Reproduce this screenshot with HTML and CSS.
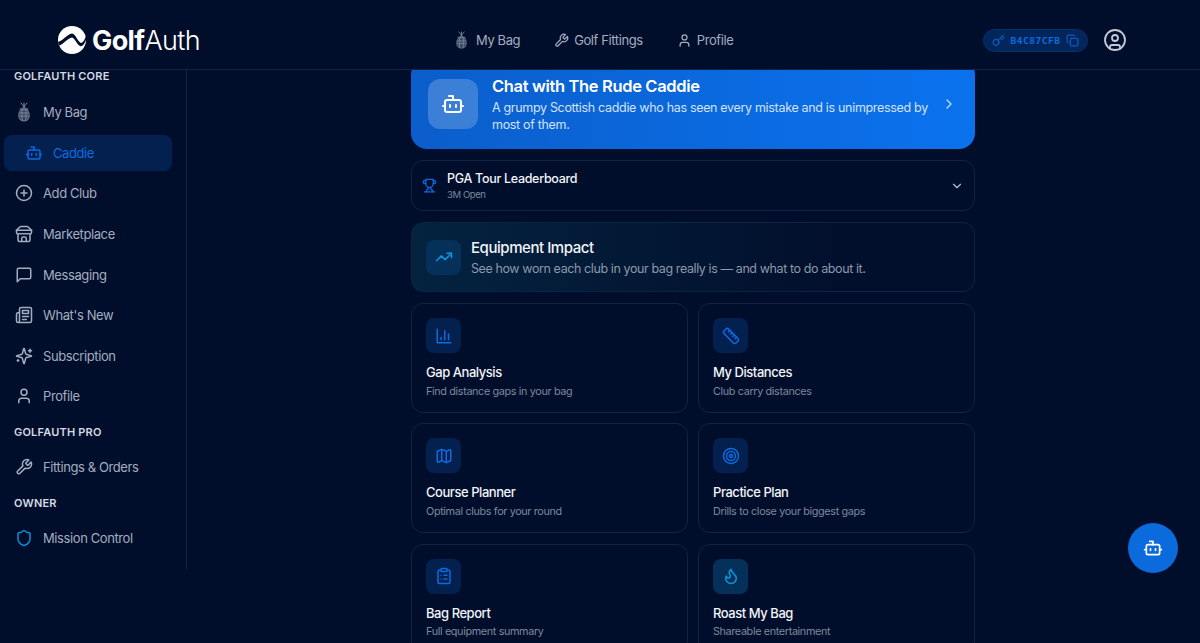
FILE: index.html
```html
<!DOCTYPE html>
<html lang="en">
<head>
    <meta charset="UTF-8">
    <meta name="viewport" content="width=device-width, initial-scale=1.0">
    <title>GolfAuth</title>
    <link rel="stylesheet" href="styles.css">
</head>
<body>
    <svg class="sprites" aria-hidden="true">
        <symbol id="i-bot" viewBox="0 0 24 24"><path d="M12 8V4H8"/><rect width="16" height="12" x="4" y="8" rx="2"/><path d="M2 14h2"/><path d="M20 14h2"/><path d="M15 13v2"/><path d="M9 13v2"/></symbol>
        <symbol id="i-bag" viewBox="0 0 14 20"><path d="M4 1l5 6M10 1L5 7M7 1v5M3 7h8"/><path d="M3.500 8C2 10 1.500 12 2 15c.3 2 1.500 4 5 4s4.700-2 5-4c.500-3 0-5-1.500-7z" fill="currentColor" fill-opacity=".45"/><path d="M3 11h8M3 14h8M5 8v10M9 8v10"/></symbol>
        <symbol id="i-plus" viewBox="0 0 24 24"><circle cx="12" cy="12" r="10"/><path d="M8 12h8"/><path d="M12 8v8"/></symbol>
        <symbol id="i-store" viewBox="0 0 24 24"><path d="m2 7 4.410-4.410A2 2 0 0 1 7.830 2h8.340a2 2 0 0 1 1.420.590L22 7"/><path d="M4 12v8a2 2 0 0 0 2 2h12a2 2 0 0 0 2-2v-8"/><path d="M15 22v-4a2 2 0 0 0-2-2h-2a2 2 0 0 0-2 2v4"/><path d="M2 7h20"/><path d="M22 7v3a2 2 0 0 1-2 2 2.700 2.700 0 0 1-1.590-.630.700.700 0 0 0-.820 0A2.700 2.700 0 0 1 16 12a2.700 2.700 0 0 1-1.590-.630.700.700 0 0 0-.820 0A2.700 2.700 0 0 1 12 12a2.700 2.700 0 0 1-1.590-.630.700.700 0 0 0-.820 0A2.700 2.700 0 0 1 8 12a2.700 2.700 0 0 1-1.590-.630.700.700 0 0 0-.820 0A2.700 2.700 0 0 1 4 12a2 2 0 0 1-2-2V7"/></symbol>
        <symbol id="i-message" viewBox="0 0 24 24"><path d="M21 15a2 2 0 0 1-2 2H7l-4 4V5a2 2 0 0 1 2-2h14a2 2 0 0 1 2 2z"/></symbol>
        <symbol id="i-news" viewBox="0 0 24 24"><path d="M4 22h16a2 2 0 0 0 2-2V4a2 2 0 0 0-2-2H8a2 2 0 0 0-2 2v16a2 2 0 0 1-2 2Zm0 0a2 2 0 0 1-2-2v-9c0-1.100.9-2 2-2h2"/><path d="M18 14h-8"/><path d="M15 18h-5"/><path d="M10 6h8v4h-8V6Z"/></symbol>
        <symbol id="i-spark" viewBox="0 0 24 24"><path d="M9.937 15.500A2 2 0 0 0 8.500 14.063l-6.135-1.582a.5.5 0 0 1 0-.962L8.500 9.936A2 2 0 0 0 9.937 8.500l1.582-6.135a.5.5 0 0 1 .963 0L14.063 8.500A2 2 0 0 0 15.500 9.937l6.135 1.581a.5.5 0 0 1 0 .964L15.500 14.063a2 2 0 0 0-1.437 1.437l-1.582 6.135a.5.5 0 0 1-.963 0z"/><path d="M20 3v4"/><path d="M22 5h-4"/><path d="M4 17v2"/><path d="M5 18H3"/></symbol>
        <symbol id="i-user" viewBox="0 0 24 24"><path d="M19 21v-2a4 4 0 0 0-4-4H9a4 4 0 0 0-4 4v2"/><circle cx="12" cy="7" r="4"/></symbol>
        <symbol id="i-wrench" viewBox="0 0 24 24"><path d="M14.700 6.300a1 1 0 0 0 0 1.400l1.600 1.600a1 1 0 0 0 1.400 0l3.770-3.770a6 6 0 0 1-7.940 7.940l-6.910 6.910a2.120 2.120 0 0 1-3-3l6.910-6.910a6 6 0 0 1 7.940-7.940l-3.760 3.760z"/></symbol>
        <symbol id="i-shield" viewBox="0 0 24 24"><path d="M20 13c0 5-3.500 7.500-7.660 8.950a1 1 0 0 1-.670-.010C7.500 20.500 4 18 4 13V6a1 1 0 0 1 1-1c2 0 4.500-1.200 6.240-2.720a1.170 1.170 0 0 1 1.520 0C14.510 3.810 17 5 19 5a1 1 0 0 1 1 1z"/></symbol>
        <symbol id="i-key" viewBox="0 0 24 24"><path d="m15.500 7.500 2.300 2.300a1 1 0 0 0 1.400 0l2.100-2.100a1 1 0 0 0 0-1.400L19 4"/><path d="m21 2-9.600 9.600"/><circle cx="7.500" cy="15.500" r="5.500"/></symbol>
        <symbol id="i-copy" viewBox="0 0 24 24"><rect width="14" height="14" x="8" y="8" rx="2"/><path d="M4 16c-1.100 0-2-.9-2-2V4c0-1.100.9-2 2-2h10c1.100 0 2 .9 2 2"/></symbol>
        <symbol id="i-account" viewBox="0 0 24 24"><circle cx="12" cy="12" r="10"/><circle cx="12" cy="10" r="3"/><path d="M7 20.662V19a2 2 0 0 1 2-2h6a2 2 0 0 1 2 2v1.662"/></symbol>
        <symbol id="i-trophy" viewBox="0 0 24 24"><path d="M6 9H4.500a2.500 2.500 0 0 1 0-5H6"/><path d="M18 9h1.500a2.500 2.500 0 0 0 0-5H18"/><path d="M4 22h16"/><path d="M10 14.660V17c0 .55-.47.98-.97 1.210C7.850 18.750 7 20.240 7 22"/><path d="M14 14.660V17c0 .55.47.98.97 1.210C16.150 18.750 17 20.240 17 22"/><path d="M18 2H6v7a6 6 0 0 0 12 0V2Z"/></symbol>
        <symbol id="i-trend" viewBox="0 0 24 24"><path d="M22 7l-8.500 8.500-5-5L2 17"/><path d="M16 7h6v6"/></symbol>
        <symbol id="i-chart" viewBox="0 0 24 24"><path d="M3 3v18h18"/><path d="M18 17V9"/><path d="M13 17V5"/><path d="M8 17v-3"/></symbol>
        <symbol id="i-ruler" viewBox="0 0 24 24"><path d="M21.300 15.300a2.400 2.400 0 0 1 0 3.400l-2.600 2.600a2.400 2.400 0 0 1-3.400 0L2.700 8.700a2.410 2.410 0 0 1 0-3.400l2.600-2.600a2.410 2.410 0 0 1 3.400 0Z"/><path d="m14.500 12.500 2-2"/><path d="m11.500 9.500 2-2"/><path d="m8.500 6.500 2-2"/><path d="m17.500 15.500 2-2"/></symbol>
        <symbol id="i-map" viewBox="0 0 24 24"><path d="M14.106 5.553a2 2 0 0 0 1.788 0l3.659-1.830A1 1 0 0 1 21 4.619v12.764a1 1 0 0 1-.553.894l-4.553 2.277a2 2 0 0 1-1.788 0l-4.212-2.106a2 2 0 0 0-1.788 0l-3.659 1.830A1 1 0 0 1 3 19.381V6.618a1 1 0 0 1 .553-.894l4.553-2.277a2 2 0 0 1 1.788 0z"/><path d="M15 5.764v15"/><path d="M9 3.236v15"/></symbol>
        <symbol id="i-target" viewBox="0 0 24 24"><circle cx="12" cy="12" r="10"/><circle cx="12" cy="12" r="6"/><circle cx="12" cy="12" r="2"/></symbol>
        <symbol id="i-clipboard" viewBox="0 0 24 24"><rect width="8" height="4" x="8" y="2" rx="1"/><path d="M16 4h2a2 2 0 0 1 2 2v14a2 2 0 0 1-2 2H6a2 2 0 0 1-2-2V6a2 2 0 0 1 2-2h2"/><path d="M12 11h4"/><path d="M12 16h4"/><path d="M8 11h.01"/><path d="M8 16h.01"/></symbol>
        <symbol id="i-flame" viewBox="0 0 24 24"><path d="M8.500 14.500A2.500 2.500 0 0 0 11 12c0-1.380-.5-2-1-3-1.072-2.143-.224-4.054 2-6 .5 2.500 2 4.900 4 6.500 2 1.600 3 3.500 3 5.500a7 7 0 1 1-14 0c0-1.153.433-2.294 1-3a2.500 2.500 0 0 0 2.500 2.500z"/></symbol>
    </svg>

    <header class="topbar">
        <a class="logo">
            <svg class="logo-mark" viewBox="0 0 28 28"><circle cx="14" cy="14" r="14" fill="#fff"/><path d="M0 16C5 15 9 8 14 7.500 18 8 19 15 23 17c2 0 4-4 5-7v4c-2 5-4 7-6 6-3-1-5-8-8-8.500-4 .5-9 7-13 8z" fill="#010e2b"/></svg>
            <span class="logo-text"><b>Golf</b>Auth</span>
        </a>
        <nav class="topnav">
            <a class="topnav-link"><svg class="icon icon-bag"><use href="#i-bag"/></svg>My Bag</a>
            <a class="topnav-link"><svg class="icon"><use href="#i-wrench"/></svg>Golf Fittings</a>
            <a class="topnav-link"><svg class="icon"><use href="#i-user"/></svg>Profile</a>
        </nav>
        <div class="topbar-right">
            <div class="key-pill">
                <svg class="icon"><use href="#i-key"/></svg>
                <span class="key-code">B4C87CFB</span>
                <svg class="icon"><use href="#i-copy"/></svg>
            </div>
            <svg class="icon account"><use href="#i-account"/></svg>
        </div>
    </header>

    <div class="layout">
        <aside class="sidebar">
            <div class="side-label first">GOLFAUTH CORE</div>
            <a class="side-item"><svg class="icon icon-bag"><use href="#i-bag"/></svg>My Bag</a>
            <a class="side-item active"><svg class="icon"><use href="#i-bot"/></svg>Caddie</a>
            <a class="side-item"><svg class="icon"><use href="#i-plus"/></svg>Add Club</a>
            <a class="side-item"><svg class="icon"><use href="#i-store"/></svg>Marketplace</a>
            <a class="side-item"><svg class="icon"><use href="#i-message"/></svg>Messaging</a>
            <a class="side-item"><svg class="icon"><use href="#i-news"/></svg>What's New</a>
            <a class="side-item"><svg class="icon"><use href="#i-spark"/></svg>Subscription</a>
            <a class="side-item"><svg class="icon"><use href="#i-user"/></svg>Profile</a>
            <div class="side-label">GOLFAUTH PRO</div>
            <a class="side-item"><svg class="icon"><use href="#i-wrench"/></svg>Fittings &amp; Orders</a>
            <div class="side-label">OWNER</div>
            <a class="side-item"><svg class="icon icon-shield"><use href="#i-shield"/></svg>Mission Control</a>
        </aside>

        <main class="main">
            <div class="content">
                <a class="chat-card">
                    <span class="chat-icon"><svg class="icon"><use href="#i-bot"/></svg></span>
                    <span class="chat-text">
                        <span class="chat-title">Chat with The Rude Caddie</span>
                        <span class="chat-desc">A grumpy Scottish caddie who has seen every mistake and is unimpressed by most of them.</span>
                    </span>
                    <svg class="icon chat-arrow" viewBox="0 0 24 24"><path d="m9 18 6-6-6-6"/></svg>
                </a>

                <div class="leader-row">
                    <svg class="icon leader-icon"><use href="#i-trophy"/></svg>
                    <div class="leader-text">
                        <div class="leader-title">PGA Tour Leaderboard</div>
                        <div class="leader-sub">3M Open</div>
                    </div>
                    <svg class="icon leader-arrow" viewBox="0 0 24 24"><path d="m6 9 6 6 6-6"/></svg>
                </div>

                <div class="impact-card">
                    <span class="tile tile-cyan"><svg class="icon"><use href="#i-trend"/></svg></span>
                    <div>
                        <div class="impact-title">Equipment Impact</div>
                        <div class="impact-desc">See how worn each club in your bag really is — and what to do about it.</div>
                    </div>
                </div>

                <div class="tool-grid">
                    <a class="tool-card">
                        <span class="tile"><svg class="icon"><use href="#i-chart"/></svg></span>
                        <div class="tool-title">Gap Analysis</div>
                        <div class="tool-desc">Find distance gaps in your bag</div>
                    </a>
                    <a class="tool-card">
                        <span class="tile"><svg class="icon"><use href="#i-ruler"/></svg></span>
                        <div class="tool-title">My Distances</div>
                        <div class="tool-desc">Club carry distances</div>
                    </a>
                    <a class="tool-card">
                        <span class="tile"><svg class="icon"><use href="#i-map"/></svg></span>
                        <div class="tool-title">Course Planner</div>
                        <div class="tool-desc">Optimal clubs for your round</div>
                    </a>
                    <a class="tool-card">
                        <span class="tile"><svg class="icon"><use href="#i-target"/></svg></span>
                        <div class="tool-title">Practice Plan</div>
                        <div class="tool-desc">Drills to close your biggest gaps</div>
                    </a>
                    <a class="tool-card">
                        <span class="tile"><svg class="icon"><use href="#i-clipboard"/></svg></span>
                        <div class="tool-title">Bag Report</div>
                        <div class="tool-desc">Full equipment summary</div>
                    </a>
                    <a class="tool-card">
                        <span class="tile tile-cyan"><svg class="icon"><use href="#i-flame"/></svg></span>
                        <div class="tool-title">Roast My Bag</div>
                        <div class="tool-desc">Shareable entertainment</div>
                    </a>
                </div>
            </div>
        </main>
    </div>

    <button class="fab"><svg class="icon"><use href="#i-bot"/></svg></button>
</body>
</html>
```

FILE: styles.css
```css
html, body {
    margin: 0;
    padding: 0;
    height: 100%;
    overflow: hidden;
}

body {
    background-color: #010e2b;
    color: #fff;
    font-family: Inter, "Noto Sans", sans-serif;
}

.sprites {
    display: none;
}

.icon {
    fill: none;
    stroke: currentColor;
    stroke-width: 2;
    stroke-linecap: round;
    stroke-linejoin: round;
    flex-shrink: 0;
}

/* top bar */
.topbar {
    height: 70px;
    box-sizing: border-box;
    padding-top: 11px;
    border-bottom: 1px solid #14233f;
    display: flex;
    align-items: center;
}

.logo {
    display: flex;
    align-items: center;
    gap: 6px;
    margin-left: 58px;
    width: 380px;
}

.logo-mark {
    width: 28px;
    height: 28px;
}

.logo-text {
    font-size: 27px;
    font-weight: 300;
    letter-spacing: -0.6px;
    color: #fff;
}

.logo-text b {
    font-weight: 700;
}

.topnav {
    display: flex;
    align-items: center;
    gap: 34px;
    margin-left: 16px;
}

.topnav-link {
    display: flex;
    align-items: center;
    gap: 5px;
    font-size: 13px;
    letter-spacing: -0.4px;
    color: #a3adc0;
}

.topnav-link .icon {
    width: 15px;
    height: 15px;
}

.topnav-link .icon-bag {
    height: 18px;
    margin-right: 2px;
}

.topbar-right {
    margin-left: auto;
    margin-right: 73px;
    display: flex;
    align-items: center;
    gap: 15px;
}

.key-pill {
    width: 105px;
    height: 23px;
    box-sizing: border-box;
    border: 1px solid #06306e;
    border-radius: 12px;
    background-color: #03265a;
    color: #0b6be0;
    display: flex;
    align-items: center;
    justify-content: center;
    gap: 5px;
}

.key-pill .icon {
    width: 13px;
    height: 13px;
    stroke-width: 1.800;
}

.key-code {
    font-family: "DejaVu Sans Mono", monospace;
    font-size: 9.500px;
    font-weight: 700;
    letter-spacing: 0.55px;
}

.account {
    width: 24px;
    height: 24px;
    stroke-width: 1.800;
    color: #c3cad6;
}

/* layout */
.layout {
    display: flex;
    height: 573px;
}

.sidebar {
    width: 186px;
    height: 499px;
    border-right: 1px solid #14233f;
    flex-shrink: 0;
}

.side-label {
    height: 12px;
    line-height: 12px;
    font-size: 11px;
    font-weight: 600;
    letter-spacing: 0.2px;
    color: #d3d9e3;
    margin: 11.300px 0 11px 14px;
}

.side-label.first {
    margin-top: 0;
    margin-bottom: 12px;
}

.side-item {
    display: flex;
    align-items: center;
    gap: 10px;
    height: 36.600px;
    margin-bottom: 4px;
    padding-left: 15px;
    font-size: 13px;
    letter-spacing: -0.4px;
    color: #a3adc0;
}

.side-item .icon {
    width: 18px;
    height: 18px;
}

.side-item .icon-bag {
    height: 20px;
}

.side-item.active {
    width: 168px;
    margin-left: 4px;
    padding-left: 21px;
    box-sizing: border-box;
    border-radius: 8px;
    background-color: #03204e;
    color: #0b6be0;
}

.icon-bag {
    stroke-width: 1;
    opacity: .75;
}

.icon-shield {
    color: #0b8fd8;
}

/* main column */
.main {
    flex: 1;
    overflow: hidden;
    padding-right: 1px;
}

.content {
    width: 564px;
    margin: -11px auto 0;
    display: flex;
    flex-direction: column;
    gap: 11px;
}

.chat-card {
    height: 90px;
    box-sizing: border-box;
    padding: 0 18px 0 17px;
    border-radius: 16px;
    background: linear-gradient(90deg, #0b5ecb, #0a72ee);
    display: flex;
    align-items: center;
    gap: 8px;
}

.chat-icon {
    width: 50px;
    height: 50px;
    margin-right: 6px;
    border-radius: 12px;
    background-color: rgba(255, 255, 255, 0.2);
    display: flex;
    align-items: center;
    justify-content: center;
    flex-shrink: 0;
}

.chat-icon .icon {
    width: 24px;
    height: 24px;
}

.chat-text {
    flex: 1;
    display: block;
}

.chat-title {
    display: block;
    font-size: 16.500px;
    font-weight: 600;
    letter-spacing: -0.35px;
    line-height: 22px;
}

.chat-desc {
    display: block;
    font-size: 12.500px;
    letter-spacing: -0.32px;
    line-height: 17px;
    margin-top: 2px;
    color: #d3e2f8;
}

.chat-arrow {
    width: 16px;
    height: 16px;
    color: #bcd6f8;
}

.leader-row {
    height: 51px;
    box-sizing: border-box;
    border: 1px solid #14233f;
    border-radius: 12px;
    display: flex;
    align-items: center;
    padding: 0 10px;
    gap: 10px;
}

.leader-icon {
    width: 15px;
    height: 15px;
    color: #0b6be0;
}

.leader-text {
    flex: 1;
    padding-top: 2px;
}

.leader-title {
    font-size: 12.500px;
    font-weight: 500;
    letter-spacing: -0.3px;
    line-height: 16px;
    color: #f1f4f8;
}

.leader-sub {
    font-size: 9.500px;
    letter-spacing: -0.4px;
    line-height: 14px;
    margin-top: 1px;
    color: #7d889d;
}

.leader-arrow {
    width: 14px;
    height: 14px;
    color: #b9c2d0;
}

.impact-card {
    height: 70px;
    box-sizing: border-box;
    border: 1px solid #0a2542;
    border-radius: 12px;
    background: linear-gradient(90deg, #03233f, #010f2c 75%);
    display: flex;
    align-items: center;
    padding: 0 14px;
    gap: 10px;
}

.impact-title {
    font-size: 15px;
    font-weight: 500;
    letter-spacing: -0.45px;
    line-height: 20px;
    margin-top: 1px;
    color: #f1f4f8;
}

.impact-desc {
    font-size: 12.500px;
    letter-spacing: -0.4px;
    line-height: 18px;
    margin-top: 2px;
    color: #8d98ac;
}

.tile {
    width: 35px;
    height: 35px;
    border-radius: 8px;
    background-color: #03204e;
    color: #0b6be0;
    display: flex;
    align-items: center;
    justify-content: center;
    flex-shrink: 0;
}

.tile .icon {
    width: 18px;
    height: 18px;
}

.tile-cyan {
    background-color: #04305a;
    color: #0b95dc;
}

.tool-grid {
    display: grid;
    grid-template-columns: 1fr 1fr;
    column-gap: 10px;
    row-gap: 10.400px;
}

.tool-card {
    height: 110px;
    box-sizing: border-box;
    border: 1px solid #14233f;
    border-radius: 12px;
    padding: 14px;
}

.tool-title {
    font-size: 13px;
    font-weight: 500;
    letter-spacing: -0.45px;
    line-height: 18px;
    margin-top: 10px;
    color: #f1f4f8;
}

.tool-desc {
    font-size: 10.800px;
    letter-spacing: -0.35px;
    line-height: 14px;
    margin-top: 3.500px;
    color: #7d889d;
}

.fab {
    position: fixed;
    left: 1128px;
    top: 523px;
    width: 50px;
    height: 50px;
    padding: 0;
    border: 0;
    border-radius: 50%;
    background-color: #0b6bdc;
    color: #fff;
    display: flex;
    align-items: center;
    justify-content: center;
}

.fab .icon {
    width: 20px;
    height: 20px;
}
```
